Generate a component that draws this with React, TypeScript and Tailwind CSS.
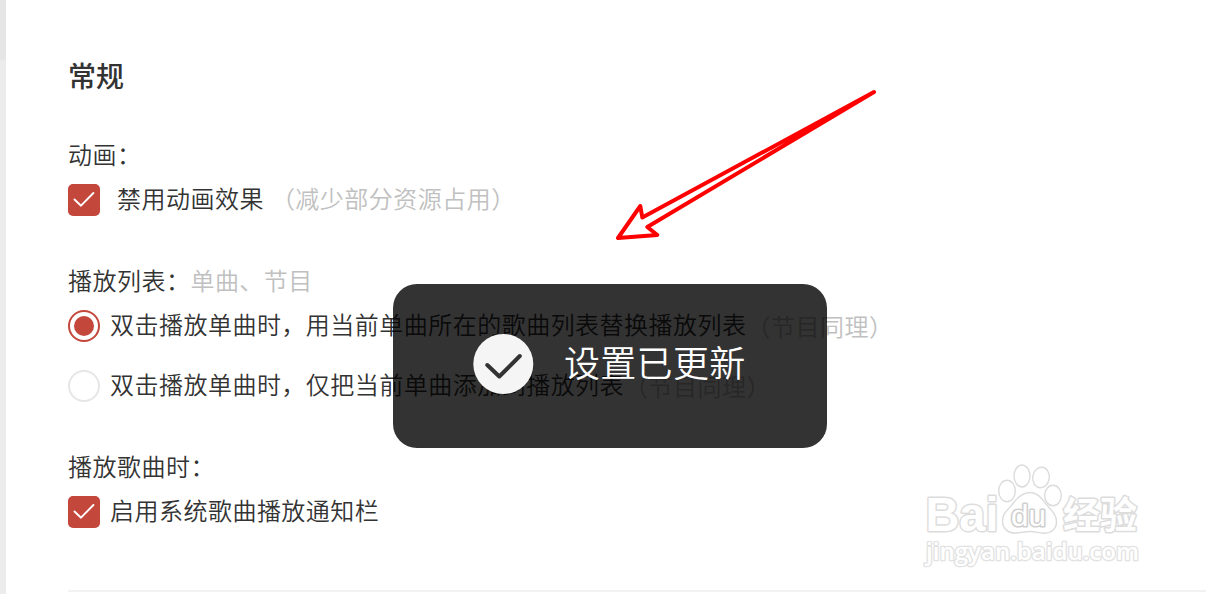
import type { ReactNode } from 'react';

interface SectionProps {
  title: string;
  hint?: string;
  children: ReactNode;
}

interface OptionProps {
  control: ReactNode;
  label: string;
  note?: string;
  wide?: boolean;
}

function CheckBox() {
  return (
    <span className="flex h-8 w-8 shrink-0 items-center justify-center rounded-[5px] bg-[#c3473a]">
      <svg viewBox="0 0 32 32" className="h-8 w-8" fill="none" stroke="#fff" strokeWidth="1.9">
        <path d="M6.5 15.5L13 21.7L25.4 9" strokeLinecap="round" strokeLinejoin="round" />
      </svg>
    </span>
  );
}

function Radio({ checked = false }: { checked?: boolean }) {
  if (!checked) {
    return <span className="h-8 w-8 shrink-0 rounded-full border-2 border-[#e6e6e6]" />;
  }
  return (
    <span className="flex h-8 w-8 shrink-0 items-center justify-center rounded-full border-2 border-[#c3473a]">
      <span className="h-5 w-5 rounded-full bg-[#c3473a]" />
    </span>
  );
}

function Section({ title, hint, children }: SectionProps) {
  return (
    <section className="flex flex-col gap-3">
      <div className="flex h-8 items-center pb-1">
        <span>{title}</span>
        {hint && <span className="text-[#c0c0c0]">{hint}</span>}
      </div>
      {children}
    </section>
  );
}

function Option({ control, label, note, wide = false }: OptionProps) {
  return (
    <label className="flex h-8 items-center">
      {control}
      <span className={wide ? 'ml-[17px] pb-1' : 'ml-[10px] pb-1'}>{label}</span>
      {note && <span className={wide ? 'ml-[7px] pb-1 text-[#c0c0c0]' : 'pb-px text-[#c0c0c0]'}>{note}</span>}
    </label>
  );
}

function Toast() {
  return (
    <div className="absolute left-[393px] top-[284px] flex h-[164px] w-[433.5px] rounded-[24px] bg-black/80 pl-20 pt-[50px]">
      <svg viewBox="0 0 60 60" className="h-[60px] w-[60px] overflow-visible" fill="none">
        <circle cx="30.3" cy="30" r="30" fill="#f5f5f5" />
        <path d="M14.3 31L26.3 42.5L46.8 22" stroke="#333" strokeWidth="4" strokeLinecap="round" strokeLinejoin="round" />
      </svg>
      <span className="ml-[31px] flex h-[60px] items-center pb-[6px] text-[36px] tracking-[0.3px] text-white">设置已更新</span>
    </div>
  );
}

// Outlined pointer towards the toast
function Arrow() {
  return (
    <svg className="absolute left-[600px] top-20" width="290" height="170" viewBox="0 0 290 170" fill="none">
      <path
        d="M274 12L42.3 137.5L40.3 126L18 158L57.3 155L47.3 147Z"
        stroke="#f00"
        strokeWidth="4"
        strokeLinecap="round"
        strokeLinejoin="round"
      />
    </svg>
  );
}

function Watermark() {
  return (
    <svg
      className="absolute left-[900px] top-[450px]"
      width="260"
      height="130"
      viewBox="0 0 260 130"
      fill="#fff"
      stroke="#dcdcdc"
      strokeWidth="1.4"
      strokeLinejoin="round"
    >
      <ellipse cx="107" cy="41" rx="8.3" ry="10.7" />
      <ellipse cx="122" cy="26" rx="8" ry="11" />
      <ellipse cx="141" cy="27.5" rx="8.3" ry="10.3" transform="rotate(8 141 27.5)" />
      <ellipse cx="153" cy="45.5" rx="8.3" ry="10.2" />
      <path d="M130 42.5C138 42.5 142 49 146 54C151 60 156.5 64 156.5 72C156.5 79 151 83.5 144 83.2C139 83 135 81.5 130 81.5C124 81.5 120 83.2 114 83C107 82.5 102.5 78 102.5 71C102.5 63 108 60 112.5 54C117 48 122 42.5 130 42.5Z" />
      <text
        x="25.5"
        y="81"
        fontSize="49"
        strokeWidth="3"
        paintOrder="stroke"
        className="font-['Liberation_Sans'] font-bold tracking-normal"
        textLength="73"
        lengthAdjust="spacingAndGlyphs"
      >
        Bai
      </text>
      <text
        x="111"
        y="75.5"
        fontSize="29"
        textLength="35"
        lengthAdjust="spacingAndGlyphs"
        className="font-['Liberation_Sans'] tracking-normal"
        stroke="#cfcfcf"
        strokeWidth="3"
        paintOrder="stroke"
      >
        du
      </text>
      <text
        x="163"
        y="79"
        fontSize="37"
        strokeWidth="3"
        paintOrder="stroke"
        className="font-['Noto_Sans_CJK_SC'] font-bold tracking-normal"
        textLength="74"
        lengthAdjust="spacingAndGlyphs"
      >
        经验
      </text>
      <text
        x="26"
        y="109.5"
        fontSize="23"
        strokeWidth="2.6"
        stroke="#e2e2e2"
        paintOrder="stroke"
        className="font-['Open_Sans'] font-semibold tracking-normal"
        textLength="213"
        lengthAdjust="spacingAndGlyphs"
      >
        jingyan.baidu.com
      </text>
    </svg>
  );
}

export default function App() {
  return (
    <div
      lang="zh-CN"
      className="relative flex h-[594px] w-[1206px] overflow-hidden whitespace-nowrap bg-white font-['Noto_Sans_CJK_SC',sans-serif] text-[24px] font-[350] leading-8 tracking-[0.48px] text-[#333]"
    >
      <aside className="w-1.5 shrink-0 bg-[#ececec]">
        <div className="h-[60px] bg-[#e6e6e6]" />
      </aside>

      <main className="flex flex-1 flex-col pl-[62px] pt-[59px]">
        <h1 className="h-8 text-[28px] font-medium tracking-normal">常规</h1>

        <div className="mt-[49px] flex flex-col gap-[50px]">
          <Section title="动画：">
            <Option control={<CheckBox />} label="禁用动画效果" note="（减少部分资源占用）" wide />
          </Section>

          <Section title="播放列表：" hint="单曲、节目">
            <div className="flex flex-col gap-7">
              <Option control={<Radio checked />} label="双击播放单曲时，用当前单曲所在的歌曲列表替换播放列表" note="（节目同理）" />
              <Option control={<Radio />} label="双击播放单曲时，仅把当前单曲添加到播放列表" note="（节目同理）" />
            </div>
          </Section>

          <Section title="播放歌曲时：">
            <Option control={<CheckBox />} label="启用系统歌曲播放通知栏" />
          </Section>
        </div>

        <div className="mt-[62px] h-0.5 shrink-0 bg-[#f2f2f2]" />
      </main>

      <Toast />
      <Arrow />
      <Watermark />
    </div>
  );
}
